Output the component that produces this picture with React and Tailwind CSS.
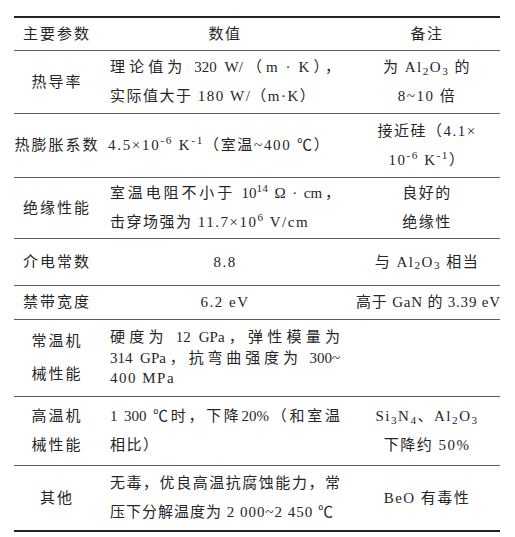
const font = { fontFamily: "'Liberation Serif', 'Noto Sans CJK SC', serif" };

function Row({ h, last, children }) {
  return (
    <div
      className={`grid grid-cols-[86px_250px_150px] items-center ${h} ${last ? "" : "border-b-[1.5px] border-[#5a5a5a]"}`}
    >
      {children}
    </div>
  );
}

function C1({ children, lh = "leading-[29px]" }) {
  return <div className={`text-center tracking-[2px] ${lh}`}>{children}</div>;
}

function C2({ children, center, lh = "leading-[29px]" }) {
  return (
    <div className={`pl-[10px] pr-[10px] tracking-[1.5px] ${lh} ${center ? "text-center" : "text-left"}`}>
      {children}
    </div>
  );
}

function C3({ children }) {
  return <div className="text-center tracking-[1.5px] leading-[29px] whitespace-nowrap pl-[4px]">{children}</div>;
}

function J({ children }) {
  return <div className="whitespace-nowrap tracking-[0px] text-justify [text-align-last:justify]">{children}</div>;
}

export default function App() {
  return (
    <div className="w-[515px] h-[537px] bg-white pt-[16px] pl-[14px] text-[#262626] text-[15px]" style={font}>
      <div className="w-[486px] border-t-2 border-b-2 border-[#222]">
        <Row h="h-[33px]">
          <C1>主要参数</C1>
          <C2 center>数值</C2>
          <C3>备注</C3>
        </Row>
        <Row h="h-[63px]">
          <C1>热导率</C1>
          <C2>
            <J>理论值为 320 W/（m · K），</J>
            <div>实际值大于 180 W/（m·K）</div>
          </C2>
          <C3>
            <div>为 Al<sub>2</sub>O<sub>3</sub> 的</div>
            <div>8~10 倍</div>
          </C3>
        </Row>
        <Row h="h-[64px]">
          <C1>热膨胀系数</C1>
          <C2>
            <div className="whitespace-nowrap -ml-[2px] tracking-[1.7px]">
              4.5×10<sup>-6</sup> K<sup>-1</sup>（室温~400 ℃）
            </div>
          </C2>
          <C3>
            <div>接近硅（4.1×</div>
            <div>10<sup>-6</sup> K<sup>-1</sup>）</div>
          </C3>
        </Row>
        <Row h="h-[61px]">
          <C1>绝缘性能</C1>
          <C2>
            <J>室温电阻不小于 10<sup>14</sup> Ω · cm，</J>
            <div>击穿场强为 11.7×10<sup>6</sup> V/cm</div>
          </C2>
          <C3>
            <div>良好的</div>
            <div>绝缘性</div>
          </C3>
        </Row>
        <Row h="h-[47px]">
          <C1>介电常数</C1>
          <C2 center>8.8</C2>
          <C3>
            <div>与 Al<sub>2</sub>O<sub>3</sub> 相当</div>
          </C3>
        </Row>
        <Row h="h-[34px]">
          <C1>禁带宽度</C1>
          <C2 center>6.2 eV</C2>
          <div className="text-center leading-[29px] whitespace-nowrap tracking-[0.8px] pl-[6px]">高于 GaN 的 3.39 eV</div>
        </Row>
        <Row h="h-[77px]">
          <C1 lh="leading-[33px]">
            <div>常温机</div>
            <div>械性能</div>
          </C1>
          <C2 lh="leading-[20.5px]">
            <J>硬度为 12 GPa，弹性模量为</J>
            <J>314 GPa，抗弯曲强度为 300~</J>
            <div>400 MPa</div>
          </C2>
          <div />
        </Row>
        <Row h="h-[69px]">
          <C1>
            <div>高温机</div>
            <div>械性能</div>
          </C1>
          <C2>
            <J>1 300 ℃时，下降20%（和室温</J>
            <div>相比）</div>
          </C2>
          <C3>
            <div>Si<sub>3</sub>N<sub>4</sub>、Al<sub>2</sub>O<sub>3</sub></div>
            <div>下降约 50%</div>
          </C3>
        </Row>
        <Row h="h-[64px]" last>
          <C1>其他</C1>
          <C2>
            <J>无毒，优良高温抗腐蚀能力，常</J>
            <div className="whitespace-nowrap tracking-[1px]">压下分解温度为 2 000~2 450 ℃</div>
          </C2>
          <C3>BeO 有毒性</C3>
        </Row>
      </div>
    </div>
  );
}
